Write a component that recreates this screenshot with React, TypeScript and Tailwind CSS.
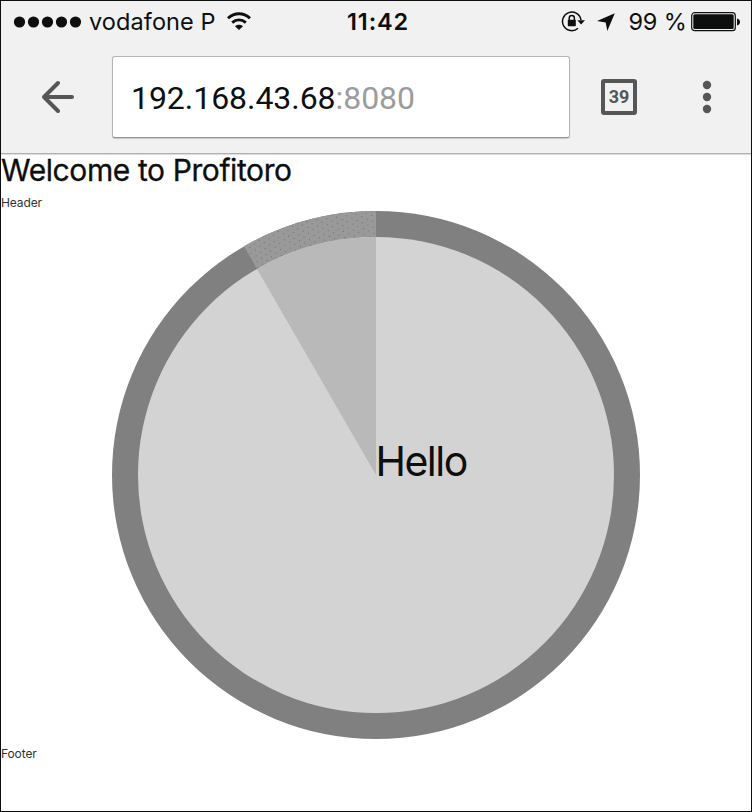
function StatusBar() {
  return (
    <div className="flex h-[41px] items-center text-[23.5px] leading-[41px] whitespace-nowrap">
      <svg className="ml-[12px] h-[14px] w-[70px] shrink-0" viewBox="0 0 70 14" fill="#0d0f0e">
        <circle cx="6.5" cy="7" r="5.6" />
        <circle cx="20.5" cy="7" r="5.6" />
        <circle cx="34.5" cy="7" r="5.6" />
        <circle cx="48.5" cy="7" r="5.6" />
        <circle cx="62.5" cy="7" r="5.6" />
      </svg>
      <span className="ml-[6px] w-[137px] tracking-[0.1px]">vodafone P</span>
      <svg className="h-[20px] w-[26px] shrink-0" viewBox="0 0 26 20" fill="none" stroke="#0d0f0e" strokeWidth="2.9">
        <path d="M2 6.2C8.5 .3 17.500 .3 24 6.200" />
        <path d="M6.200 10.600C10.200 7 15.800 7 19.800 10.600" />
        <path d="M13 18L9 14.200C11.200 12.200 14.800 12.200 17 14.200Z" fill="#0d0f0e" stroke="none" />
      </svg>
      <span className="ml-[95px] w-[70px] font-semibold tracking-[0.9px]">11:42</span>
      <svg className="ml-[144px] h-[22px] w-[25px] shrink-0" viewBox="0 0 25 22" fill="none" stroke="#0d0f0e" strokeWidth="1.5">
        <path d="M17 17.300A9.300 9.300 0 1 1 20 9" />
        <path d="M16.300 9.300H24L20.100 13.500Z" fill="#0d0f0e" stroke="none" />
        <rect x="6.800" y="8.800" width="8" height="6.400" rx=".8" fill="#0d0f0e" stroke="none" />
        <path d="M8.200 9.300V7.200a2.600 2.600 0 0 1 5.200 0V9.300" />
      </svg>
      <svg className="ml-[10px] h-[20px] w-[20px] shrink-0" viewBox="0 0 20 20" fill="#0d0f0e">
        <path d="M18.800 1.200L11.300 19L9.700 10.400L1 8.900Z" />
      </svg>
      <span className="ml-[12.5px] w-[62.5px] tracking-[-0.2px]">99 %</span>
      <svg className="h-[22px] w-[50px] shrink-0" viewBox="0 0 50 22">
        <rect x=".7" y="1.700" width="43.600" height="18" rx="3" fill="none" stroke="#0d0f0e" strokeWidth="1.2" />
        <rect x="2.300" y="3.300" width="40.400" height="14.800" rx="1.500" fill="#0d0f0e" />
        <path d="M46 7.500c2 .4 3 1.800 3 3.500s-1 3.100-3 3.500z" fill="#0d0f0e" />
      </svg>
    </div>
  );
}

function Toolbar() {
  return (
    <div className="flex h-[112px] items-start border-b border-[#b0b0b0] pt-[14px] shadow-[0_1px_1px_#dedede]">
      <svg className="mt-[24px] ml-[40px] h-[34px] w-[34px] shrink-0" viewBox="0 0 34 34" fill="none" stroke="#555756" strokeWidth="4" strokeLinecap="round" strokeLinejoin="round">
        <path d="M31 17H3M17 3L3 17L17 31" />
      </svg>
      <div className="ml-[37px] flex h-[82px] w-[458px] items-center rounded-[3px] border border-[#b5b5b5] border-b-[#929292] bg-white pt-[2px] pl-[18px] font-['Roboto',sans-serif] text-[32px] tracking-[-0.05px] whitespace-nowrap shadow-[0_1px_1px_#c8c8c8]">
        <span>192.168.43.68</span>
        <span className="text-[#9c9c9c]">:8080</span>
      </div>
      <div className="mt-[23px] ml-[31px] flex size-[36px] items-center justify-center rounded-[3px] border-4 border-[#555756] font-['Roboto',sans-serif] text-[18px] leading-none font-bold text-[#555756]">
        39
      </div>
      <svg className="mt-[24px] ml-[65px] h-[34px] w-[10px] shrink-0" viewBox="0 0 10 34" fill="#555756">
        <circle cx="5" cy="5" r="4.200" />
        <circle cx="5" cy="17" r="4.200" />
        <circle cx="5" cy="29" r="4.200" />
      </svg>
    </div>
  );
}

function Timer() {
  return (
    <svg className="mx-auto block h-[528px] w-[528px] shrink-0" viewBox="0 0 528 528">
      <defs>
        <pattern id="grain" width="10" height="6" patternUnits="userSpaceOnUse" patternTransform="rotate(-8)">
          <rect x="1" y="1" width="1" height="1" fill="#707070" />
          <rect x="6" y="4" width="1" height="1" fill="#707070" />
        </pattern>
      </defs>
      <circle cx="264" cy="264" r="264" fill="#808080" />
      <path d="M264 264L132 35.370A264 264 0 0 1 264 0Z" fill="#999999" />
      <path d="M264 264L132 35.370A264 264 0 0 1 264 0Z" fill="url(#grain)" />
      <circle cx="264" cy="264" r="238" fill="#d3d3d3" />
      <path d="M264 264L145 57.890A238 238 0 0 1 264 26Z" fill="#b9b9b9" />
      <text x="263.500" y="265" fontSize="41" letterSpacing="-1.5" fill="#0d0f0e">Hello</text>
    </svg>
  );
}

export default function App() {
  return (
    <div className="flex h-[812px] w-[752px] flex-col overflow-hidden border border-[#0d0f0e] bg-white font-['Inter',sans-serif] text-[#0d0f0e]">
      <header className="shrink-0 bg-[#f1f1f1]">
        <StatusBar />
        <Toolbar />
      </header>
      <main className="flex flex-col">
        <h1 className="h-[40px] text-[30px] leading-[33px] font-normal tracking-[-0.4px] whitespace-nowrap [-webkit-text-stroke:0.3px_#0d0f0e]">Welcome to Profitoro</h1>
        <div className="h-[17px] text-[12px] leading-[18px] tracking-[-0.1px] text-[#303231]">Header</div>
        <Timer />
        <div className="pt-[6px] text-[12px] leading-[18px] tracking-[-0.1px] text-[#303231]">Footer</div>
      </main>
    </div>
  );
}
